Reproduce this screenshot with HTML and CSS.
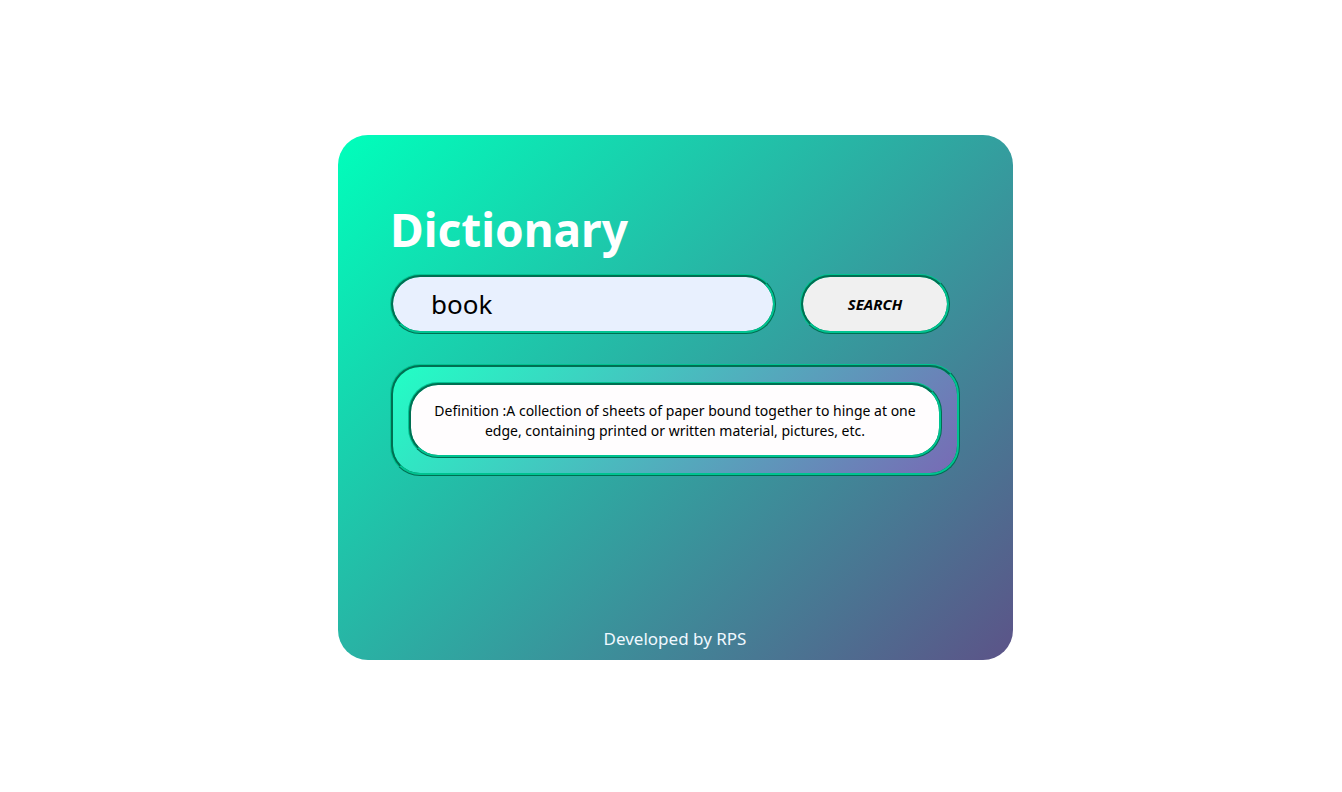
FILE: index.html
```html
<!DOCTYPE html>
<html lang="en">
<head>
<meta charset="utf-8">
<meta name="viewport" content="width=device-width, initial-scale=1">
<title>Dictionary</title>
<link rel="stylesheet" href="styles.css">
</head>
<body>
<main class="card">
  <h1 class="title">Dictionary</h1>
  <form class="search">
    <input class="search-input ridge" type="text" value="book" aria-label="Word">
    <button class="search-button ridge" type="button">SEARCH</button>
  </form>
  <section class="result ridge">
    <p class="definition ridge">Definition :A collection of sheets of paper bound together to hinge at one edge, containing printed or written material, pictures, etc.</p>
  </section>
  <footer class="credit">Developed by RPS</footer>
</main>
</body>
</html>
```

FILE: styles.css
```css
* {
  box-sizing: border-box;
}

body {
  margin: 0;
  min-height: 100vh;
  padding: 3px 0 0 9px;
  display: flex;
  align-items: center;
  justify-content: center;
  background: #fff;
  font-family: "Segoe UI", "Noto Sans", "Open Sans", sans-serif;
}

.card {
  display: flex;
  flex-direction: column;
  width: 100%;
  max-width: 675px;
  min-height: 525px;
  padding: 62px 53px 9px 52px;
  border-radius: 30px;
  background: linear-gradient(135deg, #00ffbb, #5c5388);
}

.ridge {
  border: 3px ridge #00c391;
  border-radius: 30px;
}

.title {
  margin: 0 0 12px;
  color: #fff;
  font-size: 46px;
  line-height: 65px;
}

.search {
  display: flex;
  gap: 24px;
  margin: 0 10px 30px 0;
}

.search-input {
  flex: 1;
  min-width: 0;
  height: 60px;
  padding: 0 38px;
  background: #e8f0fe;
  color: #000;
  font-family: inherit;
  font-size: 26px;
}

.search-button {
  width: 150px;
  height: 60px;
  background: #f0f0f0;
  color: #000;
  font-family: inherit;
  font-size: 15px;
  font-style: italic;
  font-weight: 700;
}

.result {
  padding: 15px;
  background: linear-gradient(135deg, #22ffc6, #786ab5);
}

.definition {
  margin: 0;
  padding: 16px 15px 14px;
  background: #fffdfe;
  color: #000;
  font-size: 14px;
  line-height: 20px;
  text-align: center;
}

.credit {
  margin-top: auto;
  color: #f0f8ff;
  font-size: 17px;
  line-height: 24px;
  text-align: center;
}
```
